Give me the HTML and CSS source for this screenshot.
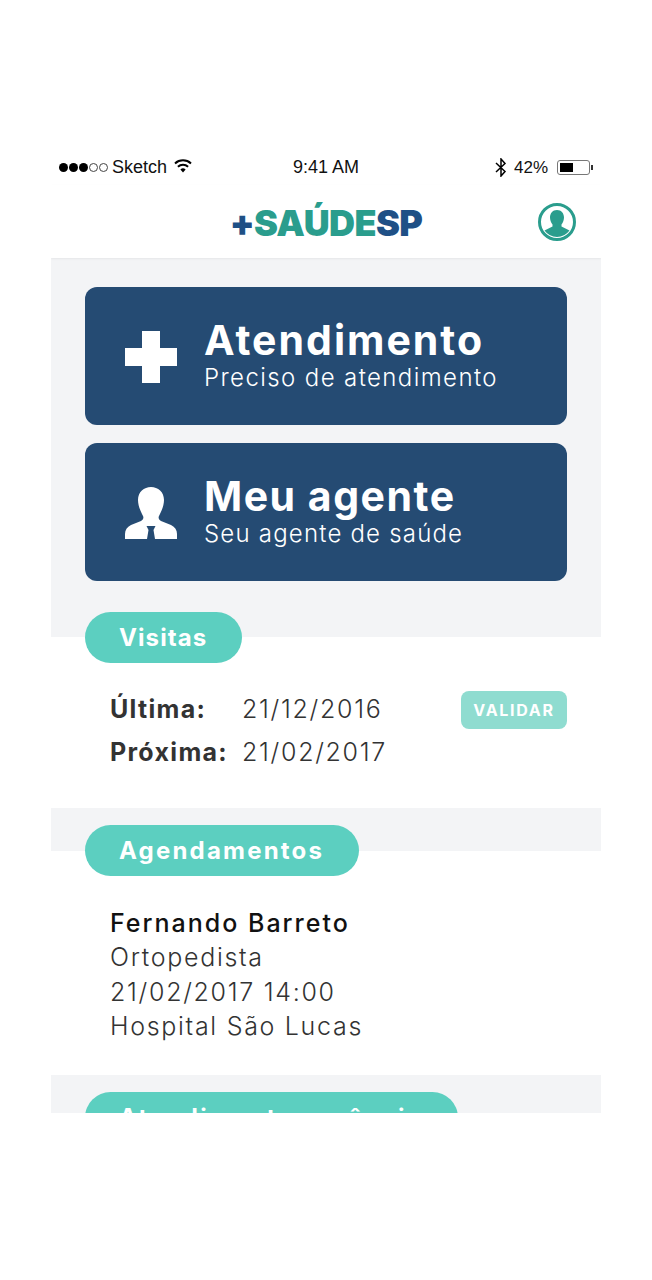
FILE: index.html
```html
<!DOCTYPE html>
<html lang="pt-BR">
<head>
  <meta charset="UTF-8" />
  <title>+SaúdeSP</title>
  <link rel="stylesheet" href="styles.css">
</head>
<body>
  <div class="phone">
    <div class="status">
      <div class="status-left">
        <span class="signal">
          <i class="dot"></i><i class="dot"></i><i class="dot"></i><i class="dot off"></i><i class="dot off"></i>
        </span>
        <span>Sketch</span>
        <svg class="wifi" width="18" height="14" viewBox="0 0 18 14">
          <path d="M9 13.5 6.4 10.4a4 4 0 0 1 5.2 0z" fill="#000"/>
          <path d="M3.9 7.7a7.6 7.6 0 0 1 10.2 0M1 4.4a12 12 0 0 1 16 0" fill="none" stroke="#000" stroke-width="2"/>
        </svg>
      </div>
      <div class="status-time">9:41 AM</div>
      <div class="status-right">
        <svg class="bt" width="12" height="19" viewBox="0 0 12 19">
          <path d="M1 5l9 8.5L6 18V1l4 4.5L1 14" fill="none" stroke="#000" stroke-width="1.5"/>
        </svg>
        <span class="percent">42%</span>
        <span class="battery"><span class="battery-level"></span></span>
        <span class="battery-tip"></span>
      </div>
    </div>

    <header class="topbar">
      <div class="logo"><span class="blue">+</span>SAÚDE<span class="blue">SP</span></div>
      <svg class="avatar" width="38" height="38" viewBox="0 0 38 38">
        <circle cx="19" cy="19" r="17.5" fill="#fff" stroke="#2a9d8d" stroke-width="3"/>
        <path d="M19 7c-4.500 0-7 3.500-7 7.500 0 2.500 1 5 2.500 7v2L6.500 27.500A16 16 0 0 0 19 34a16 16 0 0 0 12.500-6.500L23.500 23.500v-2c1.500-2 2.500-4.500 2.500-7C26 10.500 23.500 7 19 7z" fill="#2a9d8d"/>
      </svg>
    </header>

    <div class="band band-top">
      <div class="cards">
        <a class="card">
          <svg class="card-icon" width="52" height="52" viewBox="0 0 52 52">
            <path d="M17 0h18v17h17v18H35v17H17V35H0V17h17z" fill="#fff"/>
          </svg>
          <div class="card-text">
            <div class="card-title">Atendimento</div>
            <div class="card-sub">Preciso de atendimento</div>
          </div>
        </a>
        <a class="card card-tight">
          <svg class="card-icon" width="52" height="52" viewBox="0 0 52 52">
            <path d="M26 0c-7 0-13 5-13 13 0 6 3 12 5 16 1 2 0 4-2 5l-10 4c-4 2-6 5-6 9v5h22l1.500-9-2-4h9l-2 4 1.500 9h22v-5c0-4-2-7-6-9l-10-4c-2-1-3-3-2-5 2-4 5-10 5-16C39 5 33 0 26 0z" fill="#fff"/>
          </svg>
          <div class="card-text">
            <div class="card-title">Meu agente</div>
            <div class="card-sub">Seu agente de saúde</div>
          </div>
        </a>
      </div>
      <h2 class="pill pill-short">Visitas</h2>
    </div>

    <section class="panel panel-visits">
      <div class="visit-rows">
        <div class="visit-row"><b class="visit-label">Última:</b><span>21/12/2016</span></div>
        <div class="visit-row"><b class="visit-label">Próxima:</b><span>21/02/2017</span></div>
      </div>
      <button class="validate">VALIDAR</button>
    </section>

    <div class="band">
      <h2 class="pill">Agendamentos</h2>
    </div>

    <section class="panel panel-appt">
      <div class="appt-name">Fernando Barreto</div>
      <div>Ortopedista</div>
      <div>21/02/2017 14:00</div>
      <div>Hospital São Lucas</div>
    </section>

    <div class="band">
      <h2 class="pill">Atendimento urgência</h2>
    </div>
  </div>
</body>
</html>
```

FILE: styles.css
```css
body {
  margin: 0;
  background: #fff;
  font-family: Inter, "Noto Sans", sans-serif;
  color: #333;
}
.phone {
  width: 550px;
  height: 963px;
  margin: 150px 0 0 51px;
  overflow: hidden;
}

/* status bar */
.status {
  display: grid;
  grid-template-columns: 1fr auto 1fr;
  align-items: center;
  height: 35px;
  padding: 0 8px;
  font-family: "Liberation Sans", Arial, sans-serif;
  font-size: 18px;
  color: #111;
}
.status-left, .status-right {
  display: flex;
  align-items: center;
}
.status-right {
  justify-content: flex-end;
}
.signal {
  display: flex;
  gap: 1px;
  margin-right: 4px;
}
.dot {
  width: 9px;
  height: 9px;
  border-radius: 50%;
  background: #000;
}
.dot.off {
  box-sizing: border-box;
  background: none;
  border: 1px solid #444;
}
.wifi {
  margin: 0 0 3px 7px;
}
.bt {
  margin-right: 7px;
}
.percent {
  font-size: 17px;
}
.battery {
  box-sizing: border-box;
  width: 33px;
  height: 15px;
  margin-left: 9px;
  padding: 2px;
  border: 1px solid #777;
  border-radius: 3px;
}
.battery-level {
  display: block;
  width: 13px;
  height: 9px;
  background: #000;
}
.battery-tip {
  width: 2px;
  height: 5px;
  margin-left: 1px;
  background: #333;
}

/* header */
.topbar {
  position: relative;
  display: flex;
  justify-content: center;
  align-items: center;
  height: 73px;
  box-shadow: 0 1px 2px rgba(0, 0, 0, 0.06);
}
.logo {
  margin-top: 3px;
  font-size: 36px;
  font-weight: 900;
  letter-spacing: -0.6px;
  color: #2a9d8d;
}
.blue {
  color: #1f5086;
}
.avatar {
  position: absolute;
  right: 25px;
  top: 18px;
}

/* gray bands */
.band {
  padding: 17px 34px 0;
  background: #f3f4f6;
}
.band-top {
  padding-top: 29px;
}
.cards {
  display: flex;
  flex-direction: column;
  gap: 18px;
  margin-bottom: 31px;
}
.card {
  display: flex;
  align-items: center;
  height: 138px;
  padding-left: 40px;
  background: #254b73;
  border-radius: 12px;
  color: #fff;
}
.card-icon {
  flex: none;
  margin: 2px 27px 0 0;
}
.card-text {
  padding-bottom: 2px;
}
.card-title {
  font-size: 41px;
  font-weight: 700;
  line-height: 46px;
  letter-spacing: 2px;
}
.card-sub {
  font-size: 24px;
  font-weight: 300;
  line-height: 30px;
  letter-spacing: 1.4px;
}
.card-tight .card-title {
  letter-spacing: 1.5px;
}
.card-tight .card-sub {
  letter-spacing: 1.2px;
}
.pill {
  display: inline-block;
  position: relative;
  height: 51px;
  margin: 0 0 -25px;
  padding: 0 35px 0 34px;
  background: #5ccfc0;
  border-radius: 26px;
  color: #fff;
  font-size: 24px;
  font-weight: 700;
  line-height: 51px;
  letter-spacing: 2.2px;
  vertical-align: top;
}
.pill-short {
  margin-bottom: -26px;
  letter-spacing: 1.1px;
}

/* content panels */
.panel {
  position: relative;
  padding-left: 59px;
  font-size: 25px;
  font-weight: 300;
  letter-spacing: 1.7px;
}
.panel-visits {
  box-sizing: border-box;
  height: 171px;
  padding-top: 51px;
}
.visit-row {
  display: flex;
  line-height: 43px;
}
.visit-label {
  width: 132px;
  font-weight: 700;
  letter-spacing: 1.3px;
}
.validate {
  position: absolute;
  left: 410px;
  top: 54px;
  width: 106px;
  height: 38px;
  padding: 0;
  border: none;
  border-radius: 8px;
  background: #8fdcd0;
  color: #fff;
  font-family: inherit;
  font-size: 16px;
  font-weight: 700;
  letter-spacing: 1.7px;
}
.panel-appt {
  box-sizing: border-box;
  height: 224px;
  padding-top: 55px;
  line-height: 34.3px;
}
.appt-name {
  color: #111;
  font-weight: 500;
  letter-spacing: 2px;
}
```
